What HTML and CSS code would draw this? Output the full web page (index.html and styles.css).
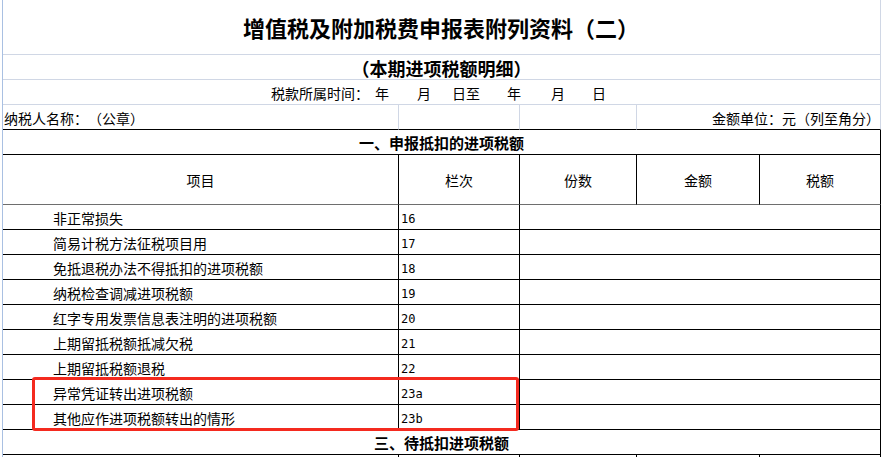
FILE: index.html
```html
<!DOCTYPE html>
<html lang="zh-CN">
<head>
<meta charset="utf-8">
<title>增值税及附加税费申报表附列资料（二）</title>
<link rel="stylesheet" href="styles.css">
</head>
<body>
<div class="sheet">
  <div class="grid">
    <div class="c light wide title">增值税及附加税费申报表附列资料（二）</div>
    <div class="c light wide subtitle">（本期进项税额明细）</div>
    <div class="c light wide period"><span>税款所属时间：</span><span class="g1">年</span><span class="g2">月</span><span class="g3">日至</span><span class="g4">年</span><span class="g5">月</span><span class="g6">日</span></div>
    <div class="c info taxpayer">纳税人名称：（公章）</div>
    <div class="c info"></div>
    <div class="c info"></div>
    <div class="c info unit">金额单位：元（列至角分）</div>
    <div class="c wide section">一、申报抵扣的进项税额</div>
    <div class="c head">项目</div>
    <div class="c head">栏次</div>
    <div class="c head">份数</div>
    <div class="c head">金额</div>
    <div class="c head">税额</div>

    <div class="c item">非正常损失</div><div class="c num">16</div><div class="c rest"></div>
    <div class="c item">简易计税方法征税项目用</div><div class="c num">17</div><div class="c rest"></div>
    <div class="c item">免抵退税办法不得抵扣的进项税额</div><div class="c num">18</div><div class="c rest"></div>
    <div class="c item">纳税检查调减进项税额</div><div class="c num">19</div><div class="c rest"></div>
    <div class="c item">红字专用发票信息表注明的进项税额</div><div class="c num">20</div><div class="c rest"></div>
    <div class="c item">上期留抵税额抵减欠税</div><div class="c num">21</div><div class="c rest"></div>
    <div class="c item">上期留抵税额退税</div><div class="c num">22</div><div class="c rest"></div>
    <div class="c item">异常凭证转出进项税额</div><div class="c num">23a</div><div class="c rest"></div>
    <div class="c item">其他应作进项税额转出的情形</div><div class="c num">23b</div><div class="c rest"></div>

    <div class="c wide section">三、待抵扣进项税额</div>
    <div class="c foot"></div>
    <div class="c foot"></div>
    <div class="c foot"></div>
    <div class="c foot"></div>
    <div class="c foot"></div>
  </div>
  <div class="highlight"></div>
</div>
</body>
</html>
```

FILE: styles.css
```css
html, body {
  margin: 0;
  padding: 0;
  background: #ffffff;
  overflow: hidden;
}

body {
  font-family: "Noto Sans CJK SC", "Noto Sans", sans-serif;
  font-size: 14px;
  color: #000;
  text-spacing-trim: space-all;
  font-feature-settings: "halt" 0, "palt" 0, "chws" 0;
}

.sheet {
  position: relative;
  width: 884px;
  height: 457px;
  overflow: hidden;
}

.grid {
  margin-left: 2px;
  border-left: 1px solid #a9c0e2;
  display: grid;
  grid-template-columns: 396px 121px 117px 123px 121px;
  grid-template-rows: 55px 25px 25px 25px 25px 50px repeat(10, 25px) 25px;
  width: 878px;
}

.c {
  box-sizing: border-box;
  border-right: 1px solid #000;
  border-bottom: 1px solid #000;
  display: flex;
  align-items: center;
  line-height: 1;
  white-space: nowrap;
  min-width: 0;
}

.wide {
  grid-column: 1 / -1;
  justify-content: center;
}

.light {
  border-right-color: #d0d7e5;
  border-bottom-color: #d0d7e5;
}

.title {
  font-size: 22px;
  font-weight: bold;
  padding-right: 1px;
  padding-bottom: 1px;
}

.subtitle {
  font-size: 18px;
  font-weight: bold;
  padding-top: 1px;
}

.period {
  justify-content: flex-start;
  padding-left: 268px;
  padding-top: 1px;
}

.g1 { margin-left: 6px; }
.g2 { margin-left: 28px; }
.g3 { margin-left: 21px; }
.g4 { margin-left: 27px; }
.g5 { margin-left: 30px; }
.g6 { margin-left: 27px; }

.info {
  border-right-color: #d0d7e5;
  padding-top: 1px;
}

.taxpayer {
  padding-left: 1px;
}

.unit {
  grid-column: span 2;
  justify-content: flex-end;
  padding-right: 0;
}

.section {
  font-size: 15px;
  font-weight: bold;
}

.head {
  justify-content: center;
  border-bottom-color: #6e6e6e;
}

.item {
  padding-left: 50px;
  padding-top: 2px;
}

.num {
  font-family: "DejaVu Sans Mono", "Liberation Mono", monospace;
  font-size: 12px;
  padding-left: 2px;
  padding-top: 3px;
}

.rest {
  grid-column: span 3;
}

.highlight {
  position: absolute;
  left: 32px;
  top: 377px;
  width: 487px;
  height: 54px;
  box-sizing: border-box;
  border: 3px solid #f42a1f;
  border-radius: 3px;
}
```
